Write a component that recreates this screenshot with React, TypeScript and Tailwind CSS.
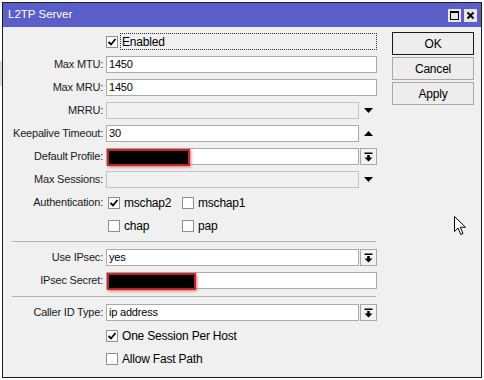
import React from 'react';

const Check = ({ checked = false }: { checked?: boolean }) => (
  <div className="w-[12px] h-[12px] border border-[#8f8f8f] bg-white flex items-center justify-center shrink-0">
    {checked && (
      <svg width="10" height="10" viewBox="0 0 10 10">
        <path d="M1.5 5 L4 7.5 L8.5 2" fill="none" stroke="#000" strokeWidth="1.8" />
      </svg>
    )}
  </div>
);

const DropButton = () => (
  <div className="w-[17px] h-[17px] border border-[#a8a8a8] bg-[#f3f3f3] flex items-center justify-center shrink-0">
    <svg width="9" height="10" viewBox="0 0 9 10">
      <rect x="0.5" y="0.5" width="8" height="1.5" fill="#000" />
      <rect x="3.2" y="3" width="2.6" height="3" fill="#000" />
      <polygon points="0.5,5.5 8.5,5.5 4.5,9.5" fill="#000" />
    </svg>
  </div>
);

const Arrow = ({ up = false }: { up?: boolean }) => (
  <div className="w-[17px] h-[17px] flex items-center justify-center shrink-0">
    <svg width="9" height="5" viewBox="0 0 9 5">
      <polygon points={up ? '0,5 9,5 4.5,0' : '0,0 9,0 4.5,5'} fill="#000" />
    </svg>
  </div>
);

const Row = ({ label, children }: { label?: string; children: React.ReactNode }) => (
  <div className="h-[23px] flex items-center">
    <div className="w-[101px] text-right pr-[1px] text-[#1a1a1a] whitespace-nowrap">{label ? `${label}:` : ''}</div>
    <div className="ml-[2px] w-[271px] flex items-center gap-[1px]">{children}</div>
  </div>
);

const Field = ({ value = '', disabled = false, redact = 0 }: { value?: string; disabled?: boolean; redact?: number }) => (
  <div
    className={`relative flex-1 h-[17px] border flex items-center px-[2px] ${
      disabled ? 'bg-[#f0f0f0] border-[#c4c4c4]' : 'bg-white border-[#ababab]'
    }`}
  >
    {value}
    {redact > 0 && (
      <div
        className="absolute left-[0px] top-[0px] h-[17px] bg-black border-2 border-[#c02424] shadow-[1px_1px_3px_#d07070]"
        style={{ width: redact }}
      />
    )}
  </div>
);

const Separator = () => <div className="ml-[9px] w-[364px] h-px bg-[#b4b4b4] my-[4px]" />;

const WinButton = ({ label, primary = false }: { label: string; primary?: boolean }) => (
  <div
    className={`h-[23px] w-[82px] flex items-center justify-center text-[12px] bg-[#ededed] ${
      primary ? 'border border-[#1a1a1a]' : 'border border-[#a8a8a8]'
    }`}
  >
    {label}
  </div>
);

export default function App() {
  return (
    <div className="relative w-[484px] h-[380px] bg-white overflow-hidden font-['Liberation_Sans',Arial,sans-serif] text-[11px] text-black tracking-[-0.2px]">
      <div className="absolute left-0 top-[61px] w-[2px] h-[25px] bg-[#d9d9d9]" />
      <div className="ml-[2px] mt-[2px] w-[480px] h-[376px] border border-[#1e1e1e] bg-[#f0f0f0] flex flex-col">
        <div className="h-[24px] bg-[#5a5ec8] flex items-center justify-between pl-[5px] pr-[4px]">
          <span className="text-white text-[11.5px] tracking-normal">L2TP Server</span>
          <div className="flex gap-[3px]">
            <div className="w-[13px] h-[13px] bg-[#e6e6e6] flex items-center justify-center">
              <div className="w-[9px] h-[9px] border border-black border-t-2" />
            </div>
            <div className="w-[13px] h-[13px] bg-[#e6e6e6] flex items-center justify-center">
              <svg width="9" height="9" viewBox="0 0 9 9">
                <path d="M1.5 1.5 L7.5 7.5 M7.5 1.5 L1.5 7.5" stroke="#000" strokeWidth="2" />
              </svg>
            </div>
          </div>
        </div>
        <div className="flex flex-1">
          <div className="pt-[3px] w-[375px]">
            <Row>
              <Check checked />
              <div className="ml-[1px] flex-1 h-[17px] border border-dotted border-[#333] flex items-center pl-[1px] text-[12px]">
                Enabled
              </div>
            </Row>
            <Row label="Max MTU">
              <Field value="1450" />
            </Row>
            <Row label="Max MRU">
              <Field value="1450" />
            </Row>
            <Row label="MRRU">
              <Field disabled />
              <Arrow />
            </Row>
            <Row label="Keepalive Timeout">
              <Field value="30" />
              <Arrow up />
            </Row>
            <Row label="Default Profile">
              <Field redact={83} />
              <DropButton />
            </Row>
            <Row label="Max Sessions">
              <Field disabled />
              <Arrow />
            </Row>
            <Row label="Authentication">
              <div className="flex items-center w-[75px] gap-[4px] pl-[2px]">
                <Check checked />
                <span className="text-[12px]">mschap2</span>
              </div>
              <div className="flex items-center gap-[4px]">
                <Check />
                <span className="text-[12px]">mschap1</span>
              </div>
            </Row>
            <Row>
              <div className="flex items-center w-[75px] gap-[4px] pl-[2px]">
                <Check />
                <span className="text-[12px]">chap</span>
              </div>
              <div className="flex items-center gap-[4px]">
                <Check />
                <span className="text-[12px]">pap</span>
              </div>
            </Row>
            <Separator />
            <Row label="Use IPsec">
              <Field value="yes" />
              <DropButton />
            </Row>
            <Row label="IPsec Secret">
              <Field redact={89} />
            </Row>
            <Separator />
            <Row label="Caller ID Type">
              <Field value="ip address" />
              <DropButton />
            </Row>
            <Row>
              <Check checked />
              <span className="ml-[3px] text-[12px]">One Session Per Host</span>
            </Row>
            <Row>
              <Check />
              <span className="ml-[3px] text-[12px]">Allow Fast Path</span>
            </Row>
          </div>
          <div className="relative flex-1 pt-[5px] pl-[14px] flex flex-col gap-[2px]">
            <WinButton label="OK" primary />
            <WinButton label="Cancel" />
            <WinButton label="Apply" />
            <svg className="absolute left-[76px] top-[189px]" width="13" height="20" viewBox="0 0 13 20">
              <path
                d="M0.5 0.5 L0.5 15.5 L4 12 L6.8 18.5 L9 17.5 L6.3 11.2 L11.5 11.2 Z"
                fill="#fff"
                stroke="#000"
                strokeWidth="1"
                strokeLinejoin="round"
              />
            </svg>
          </div>
        </div>
      </div>
    </div>
  );
}
